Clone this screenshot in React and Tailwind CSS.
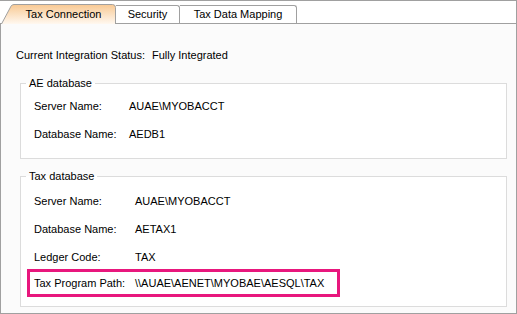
function Tab({ label, width }) {
  return (
    <div
      className={`h-[18px] ${width} border-t border-r border-[#a0a0a0] rounded-tr-[3px] bg-white flex items-center justify-center`}
    >
      {label}
    </div>
  );
}

function Row({ label, value, labelWidth = 'w-[95px]' }) {
  return (
    <div className="h-[14px] flex items-center pl-[13px] leading-[14px]">
      <span className={`${labelWidth} shrink-0`}>{label}</span>
      <span>{value}</span>
    </div>
  );
}

export default function App() {
  return (
    <div className="w-[517px] h-[314px] bg-white text-[11px] text-black font-['Liberation_Sans',Arial,sans-serif] flex flex-col border-t border-[#a0a0a0]">
      {/* tab strip */}
      <div className="h-[22px] flex items-end pl-[1px] border-r border-[#a0a0a0]">
        <div className="relative w-[115px] h-[20px] mb-[-1px] z-10 flex items-center justify-center pl-[10px]">
          <svg className="absolute inset-0" width="115" height="20" viewBox="0 0 115 20">
            <defs>
              <linearGradient id="sel" x1="0" y1="0" x2="0" y2="1">
                <stop offset="0" stopColor="#f8c993" />
                <stop offset="1" stopColor="#fff8f0" />
              </linearGradient>
            </defs>
            <path
              d="M0.5 20 L10 2.2 Q11 0.5 13 0.5 L111.5 0.5 Q114.5 0.5 114.5 3.5 L114.5 20"
              fill="url(#sel)"
              stroke="#a0a0a0"
            />
          </svg>
          <span className="relative">Tax Connection</span>
        </div>
        <Tab label="Security" width="w-[64px]" />
        <Tab label="Tax Data Mapping" width="w-[117px]" />
      </div>

      {/* panel */}
      <div className="flex-1 flex flex-col border-t border-x border-b border-[#a0a0a0] bg-[#fbfbfb]">
        <div className="mt-[24px] h-[14px] leading-[14px] pl-[15px] flex">
          <span className="w-[136px]">Current Integration Status:</span>
          <span>Fully Integrated</span>
        </div>

        <fieldset className="mt-[14px] ml-[19px] mr-[9px] border border-[#dcdcdc] bg-white pb-[17px]">
          <legend className="ml-[5px] px-[3px] leading-[14px]">AE database</legend>
          <div className="pt-[9px] flex flex-col gap-[14px]">
            <Row label="Server Name:" value="AUAE\MYOBACCT" />
            <Row label="Database Name:" value="AEDB1" />
          </div>
        </fieldset>

        <fieldset className="mt-[10px] ml-[19px] mr-[9px] border border-[#dcdcdc] bg-white pb-[9px]">
          <legend className="ml-[5px] px-[3px] leading-[14px]">Tax database</legend>
          <div className="pt-[11px] flex flex-col gap-[14px]">
            <Row label="Server Name:" value="AUAE\MYOBACCT" labelWidth="w-[101px]" />
            <Row label="Database Name:" value="AETAX1" labelWidth="w-[101px]" />
            <Row label="Ledger Code:" value="TAX" labelWidth="w-[101px]" />
          </div>
          <div className="mt-[5px] ml-[6px] w-[313px] h-[28px] border-[3px] border-[#e8177d] flex items-center pl-[4px]">
            <span className="w-[101px] shrink-0">Tax Program Path:</span>
            <span>\\AUAE\AENET\MYOBAE\AESQL\TAX</span>
          </div>
        </fieldset>
      </div>
    </div>
  );
}
